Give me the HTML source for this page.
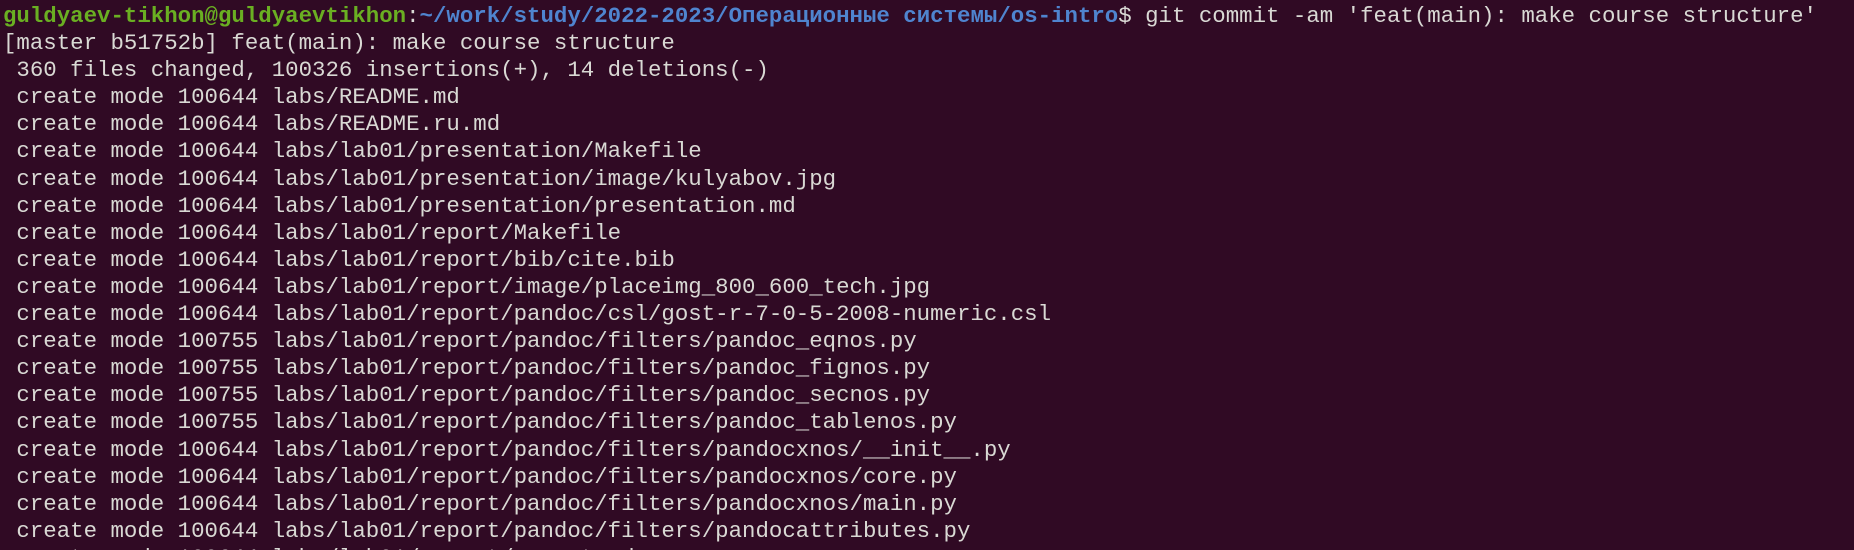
<!DOCTYPE html>
<html><head><meta charset="utf-8"><style>
html,body{margin:0;padding:0;background:#300a24;width:1854px;height:550px;overflow:hidden}
pre{margin:0;padding:3px 0 0 3px;font-family:"Liberation Mono","DejaVu Sans Mono",monospace;font-size:22.4px;line-height:27.1px;color:#d9d9d4;white-space:pre}
.g{color:#6aaf22;font-weight:bold}.b{color:#4f84cf;font-weight:bold}
</style></head><body><pre><span class="g">guldyaev-tikhon@guldyaevtikhon</span>:<span class="b">~/work/study/2022-2023/Операционные системы/os-intro</span>$ git commit -am 'feat(main): make course structure'
[master b51752b] feat(main): make course structure
 360 files changed, 100326 insertions(+), 14 deletions(-)
 create mode 100644 labs/README.md
 create mode 100644 labs/README.ru.md
 create mode 100644 labs/lab01/presentation/Makefile
 create mode 100644 labs/lab01/presentation/image/kulyabov.jpg
 create mode 100644 labs/lab01/presentation/presentation.md
 create mode 100644 labs/lab01/report/Makefile
 create mode 100644 labs/lab01/report/bib/cite.bib
 create mode 100644 labs/lab01/report/image/placeimg_800_600_tech.jpg
 create mode 100644 labs/lab01/report/pandoc/csl/gost-r-7-0-5-2008-numeric.csl
 create mode 100755 labs/lab01/report/pandoc/filters/pandoc_eqnos.py
 create mode 100755 labs/lab01/report/pandoc/filters/pandoc_fignos.py
 create mode 100755 labs/lab01/report/pandoc/filters/pandoc_secnos.py
 create mode 100755 labs/lab01/report/pandoc/filters/pandoc_tablenos.py
 create mode 100644 labs/lab01/report/pandoc/filters/pandocxnos/__init__.py
 create mode 100644 labs/lab01/report/pandoc/filters/pandocxnos/core.py
 create mode 100644 labs/lab01/report/pandoc/filters/pandocxnos/main.py
 create mode 100644 labs/lab01/report/pandoc/filters/pandocattributes.py
 create mode 100644 labs/lab01/report/report.md
</pre></body></html>
